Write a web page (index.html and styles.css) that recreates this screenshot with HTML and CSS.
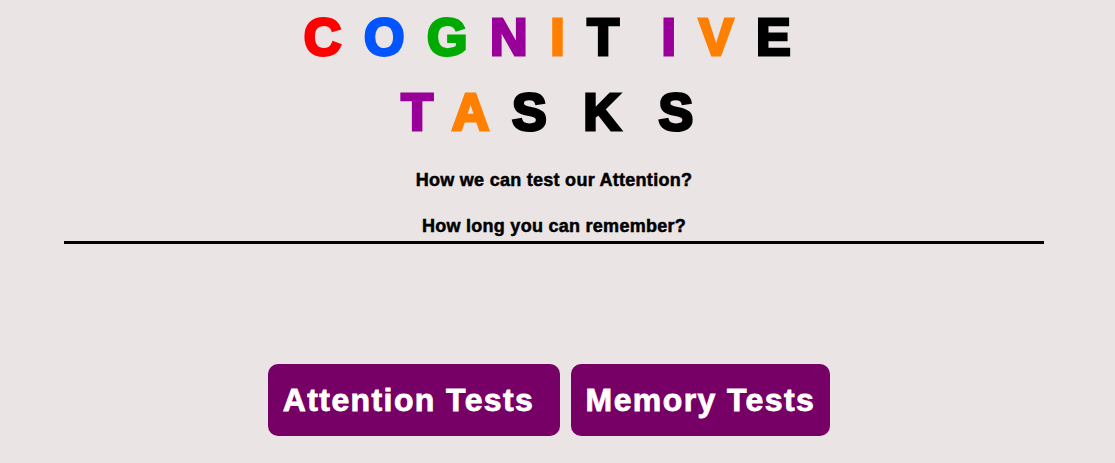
FILE: index.html
```html
<!DOCTYPE html>
<html>
<head>
<meta charset="utf-8">
<link rel="stylesheet" href="styles.css">
</head>
<body>
<div class="page">
  <h1 class="title">
    <span class="line"><span class="red">C</span><span class="blue">O</span><span class="green">G</span><span class="purple">N</span><span class="orange">I</span><span class="black wide">T</span><span class="purple">I</span><span class="orange">V</span><span class="black">E</span></span>
    <span class="line"><span class="purple">T</span><span class="orange">A</span><span class="black s1">S</span><span class="black k">K</span><span class="black">S</span></span>
  </h1>
  <p class="q q1">How we can test our Attention?</p>
  <p class="q q2">How long you can remember?</p>
  <div class="rule"></div>
  <div class="buttons">
    <button class="btn">Attention Tests&nbsp;</button>
    <button class="btn">Memory Tests</button>
  </div>
</div>
</body>
</html>
```

FILE: styles.css
```css
html, body {
  margin: 0;
  padding: 0;
  background: #eae4e4;
  font-family: "Liberation Sans", Arial, sans-serif;
}
.page {
  width: 980px;
  margin-left: 64px;
  text-align: center;
}
.title {
  margin: 0;
  padding-top: 0;
  padding-left: 9px;
  font-size: 52px;
  font-weight: bold;
  letter-spacing: 22.6px;
  line-height: 75px;
  -webkit-text-stroke: 3px currentColor;
}
.line { display: block; }
.red { color: #ff0000; }
.blue { color: #0055ff; }
.green { color: #00aa00; }
.purple { color: #990099; }
.orange { color: #ff8000; }
.black { color: #000; }
.wide { margin-right: 20px; }
.s1 { margin-right: 14px; }
.k { margin-right: 15px; }
.q {
  margin: 0;
  font-size: 18px;
  font-weight: bold;
  line-height: 21px;
  letter-spacing: 0.27px;
  -webkit-text-stroke: 0.5px #000;
}
.q1 { margin-top: 20px; }
.q2 { margin-top: 25px; }
.rule {
  height: 3px;
  background: #000;
  margin-top: 4px;
}
.buttons {
  margin-top: 120px;
  display: flex;
  justify-content: center;
  gap: 11px;
  padding-right: 10px;
}
.btn {
  height: 72px;
  padding: 0 15px;
  border: none;
  border-radius: 10px;
  background: #770066;
  color: #fff;
  font-family: "Liberation Sans", Arial, sans-serif;
  font-size: 32px;
  font-weight: bold;
  letter-spacing: 1.4px;
  -webkit-text-stroke: 0.8px #fff;
}
```
